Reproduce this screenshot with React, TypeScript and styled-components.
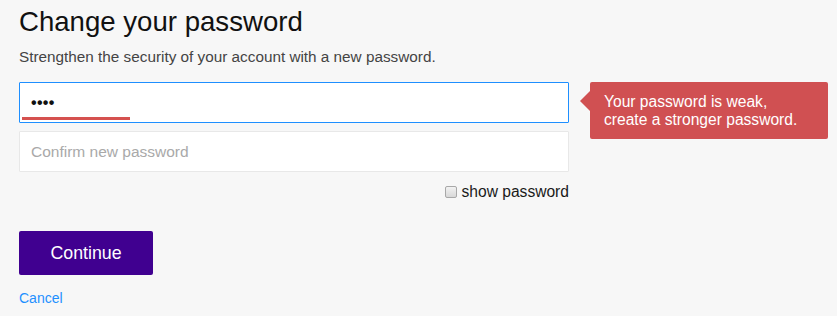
import React from "react";
import styled, { createGlobalStyle } from "styled-components";

const GlobalStyle = createGlobalStyle`
  html, body {
    margin: 0;
    padding: 0;
    background: #f7f7f7;
  }
  body {
    font-family: "Liberation Sans", Arial, sans-serif;
    min-height: 100vh;
  }
`;

const Page = styled.div`
  padding: 6px 19px 0;
  width: 550px;
  display: flex;
  flex-direction: column;
`;

const Title = styled.h1`
  margin: 0;
  font-size: 27.6px;
  line-height: 32px;
  font-weight: normal;
  color: #111;
`;

const Subtitle = styled.p`
  margin: 9px 0 15px;
  font-size: 15.3px;
  line-height: 20px;
  color: #444;
`;

const Fields = styled.div`
  display: flex;
  flex-direction: column;
  gap: 8px;
`;

const FieldWrap = styled.div`
  position: relative;
`;

const TextInput = styled.input<{ $focused?: boolean }>`
  box-sizing: border-box;
  display: block;
  width: 100%;
  height: 41px;
  margin: 0;
  padding: 0 11px;
  background: #fff;
  border: 1px solid ${(p) => (p.$focused ? "#1e8fff" : "#e8e8e8")};
  border-radius: 1px;
  outline: none;
  font-family: "Liberation Sans", Arial, sans-serif;
  font-size: 15.5px;
  color: #111;

  &::placeholder {
    color: #a9a9a9;
  }
`;

const MaskedValue = styled(TextInput)`
  font-size: 16px;
  font-weight: bold;
  letter-spacing: 0.3px;
`;

const StrengthBar = styled.div<{ $level: number }>`
  position: absolute;
  left: 3px;
  top: 35px;
  height: 3px;
  background: #d5514f;
`;

const Tooltip = styled.div`
  position: absolute;
  top: 0;
  left: calc(100% + 21px);
  width: 238px;
  box-sizing: border-box;
  padding: 11px 14px 10px;
  background: #d05052;
  border-radius: 2px;
  color: #fff;
  font-size: 15.6px;
  line-height: 18px;
  white-space: nowrap;

  &::before {
    content: "";
    position: absolute;
    left: -10px;
    top: 9px;
    border-style: solid;
    border-width: 10px 10px 10px 0;
    border-color: transparent #d05052 transparent transparent;
  }
`;

const ShowRow = styled.label`
  display: flex;
  justify-content: flex-end;
  align-items: center;
  gap: 5px;
  margin-top: 10px;
  font-size: 15.6px;
  line-height: 20px;
  color: #1a1a1a;
  cursor: pointer;
`;

const Check = styled.input`
  appearance: none;
  -webkit-appearance: none;
  box-sizing: border-box;
  width: 12px;
  height: 12px;
  margin: 0;
  border: 1px solid #a8a8a8;
  border-radius: 2px;
  background: linear-gradient(#f2f2f2, #d8d8d8);
`;

const Actions = styled.div`
  display: flex;
  flex-direction: column;
  align-items: flex-start;
  margin-top: 29px;
`;

const PrimaryButton = styled.button`
  width: 134px;
  height: 44px;
  border: none;
  border-radius: 2px;
  background: #400090;
  color: #fff;
  font-family: "Liberation Sans", Arial, sans-serif;
  font-size: 17.8px;
  cursor: pointer;
`;

const CancelLink = styled.a`
  margin-top: 15px;
  font-size: 14px;
  line-height: 17px;
  color: #1e90ff;
  text-decoration: none;
`;

export default function App() {
  const strength = 108;
  return (
    <>
      <GlobalStyle />
      <Page>
        <Title>Change your password</Title>
        <Subtitle>Strengthen the security of your account with a new password.</Subtitle>
        <Fields>
          <FieldWrap>
            <MaskedValue $focused type="text" defaultValue="••••" aria-label="New password" />
            <StrengthBar $level={1} style={{ width: strength }} />
            <Tooltip>
              Your password is weak,
              <br />
              create a stronger password.
            </Tooltip>
          </FieldWrap>
          <TextInput type="password" placeholder="Confirm new password" />
        </Fields>
        <ShowRow>
          <Check type="checkbox" />
          show password
        </ShowRow>
        <Actions>
          <PrimaryButton>Continue</PrimaryButton>
          <CancelLink href="#">Cancel</CancelLink>
        </Actions>
      </Page>
    </>
  );
}
